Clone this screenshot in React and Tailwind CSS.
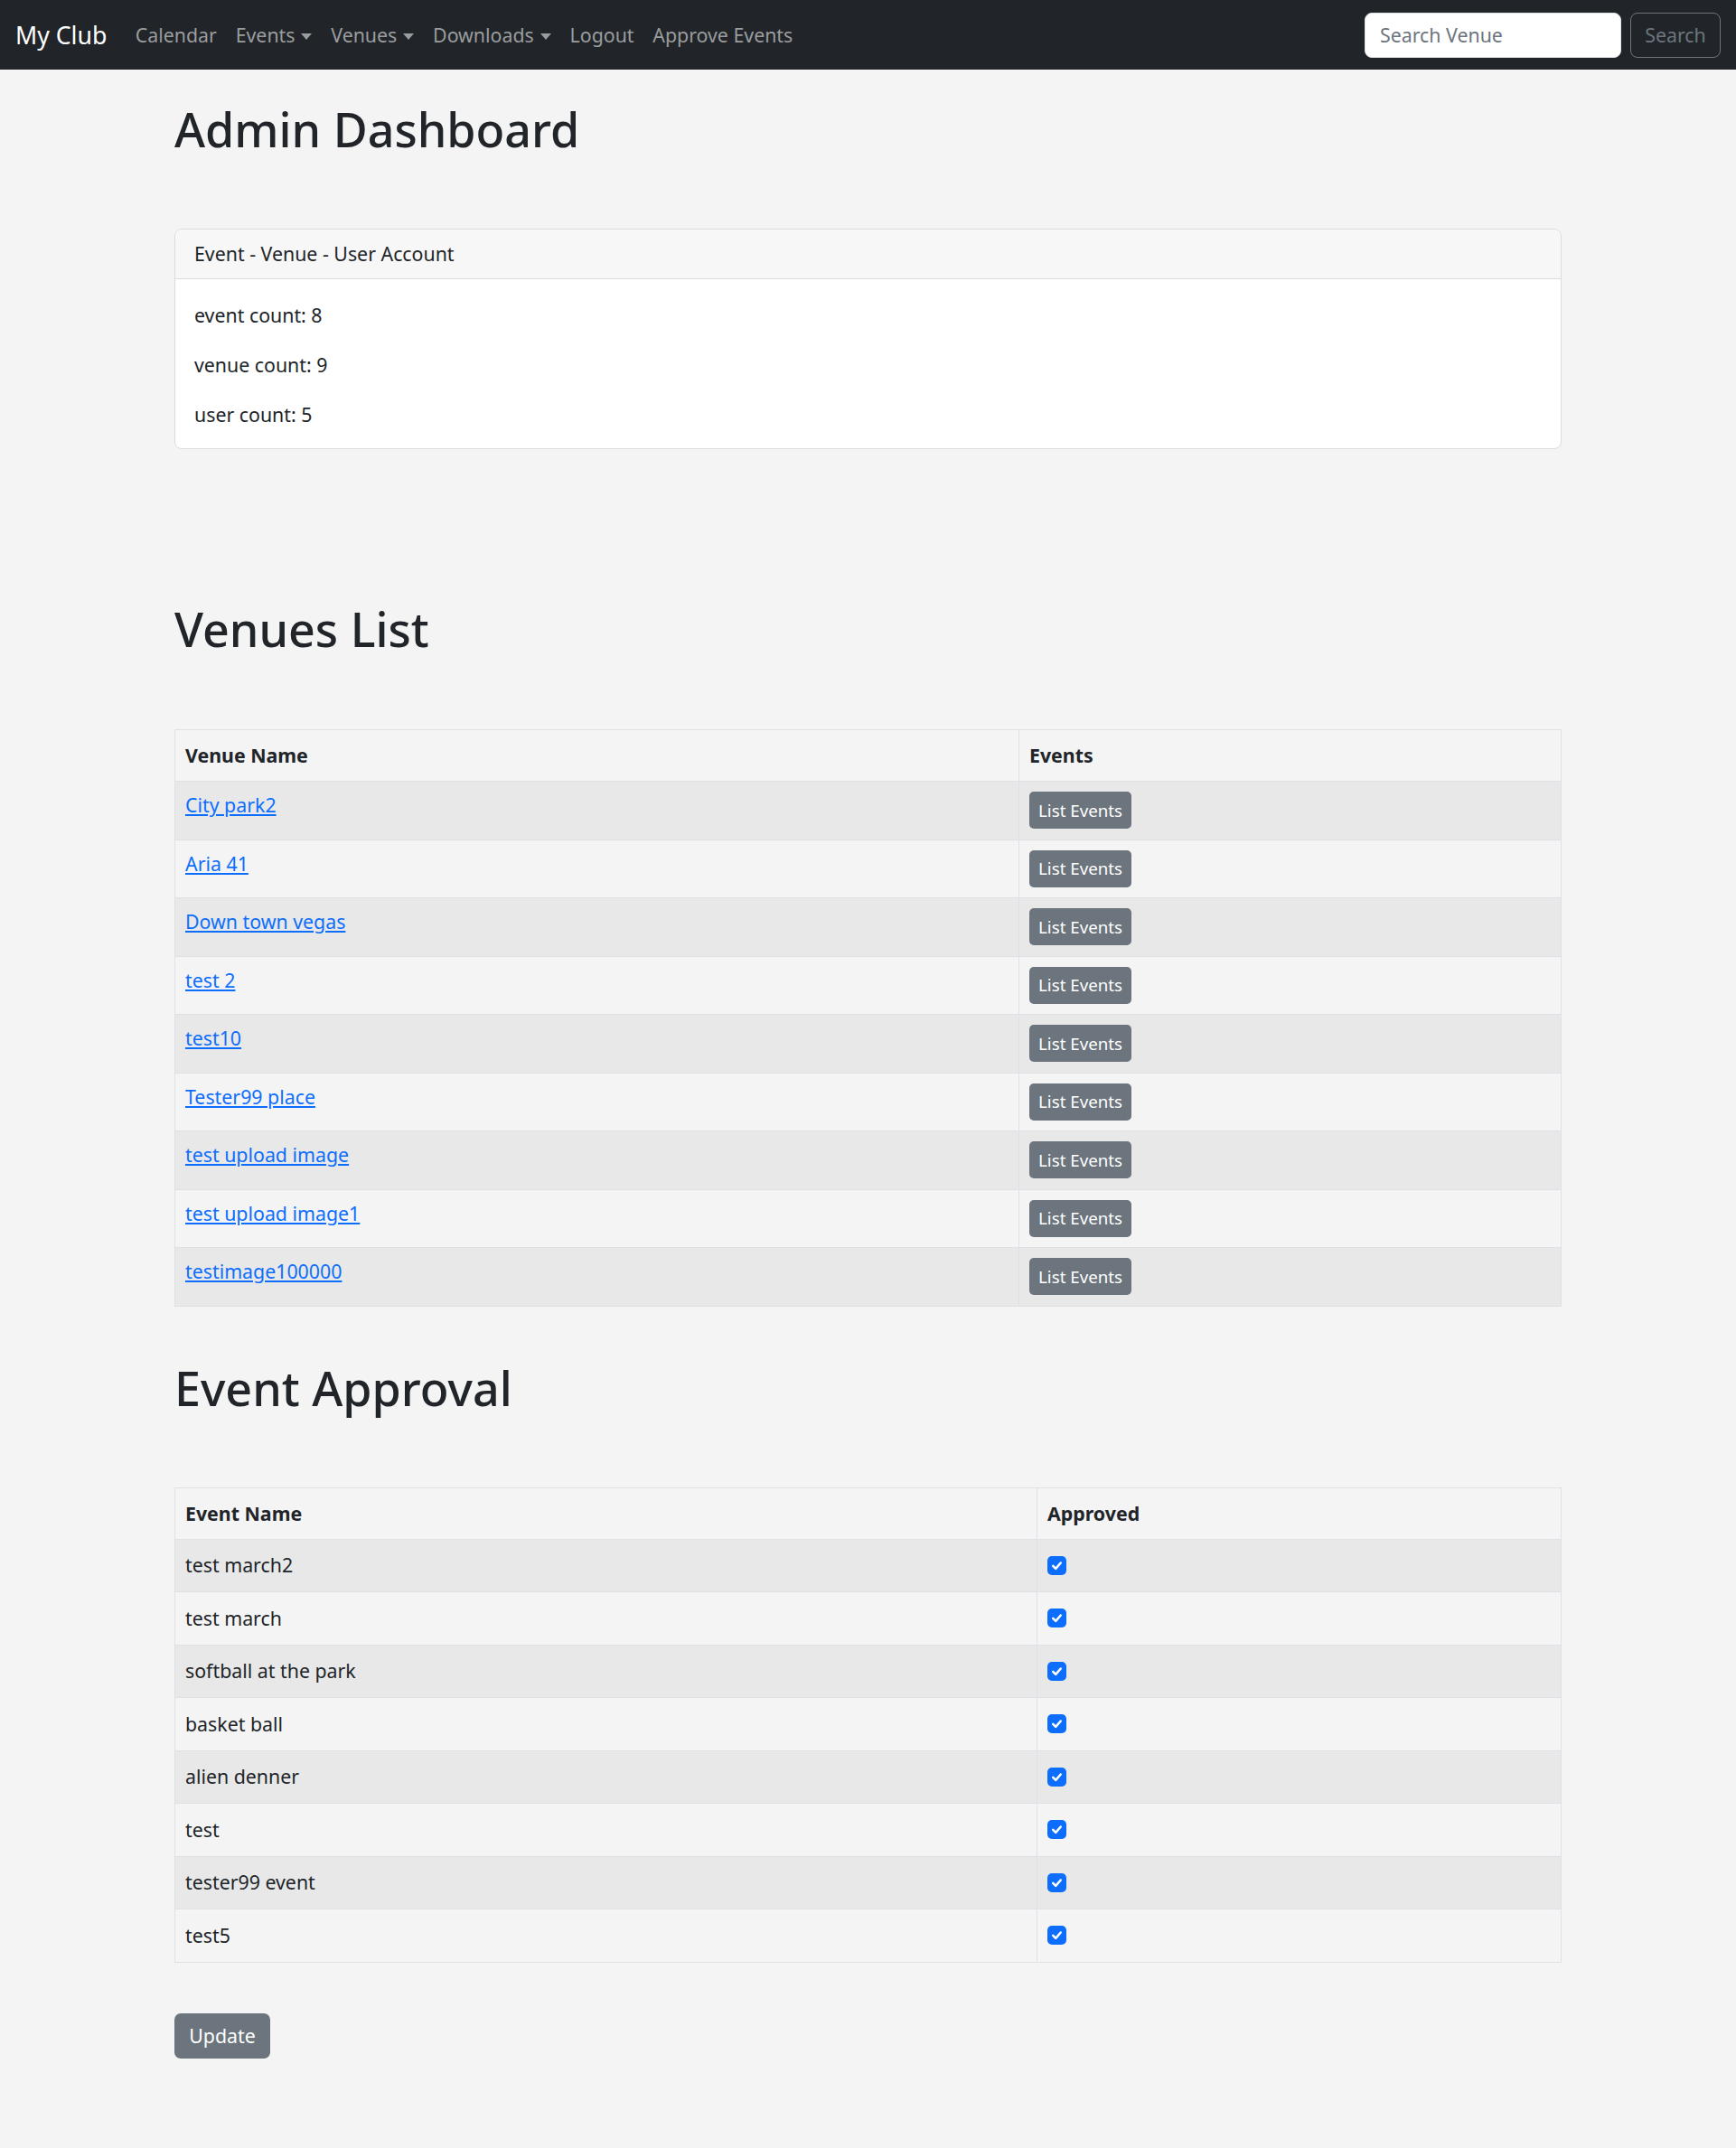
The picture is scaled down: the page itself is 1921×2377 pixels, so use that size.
const VENUES = [
  'City park2',
  'Aria 41',
  'Down town vegas',
  'test 2',
  'test10',
  'Tester99 place',
  'test upload image',
  'test upload image1',
  'testimage100000',
];

const EVENTS = [
  'test march2',
  'test march',
  'softball at the park',
  'basket ball',
  'alien denner',
  'test',
  'tester99 event',
  'test5',
];

const NAV = [
  { label: 'Calendar', caret: false },
  { label: 'Events', caret: true },
  { label: 'Venues', caret: true },
  { label: 'Downloads', caret: true },
  { label: 'Logout', caret: false },
  { label: 'Approve Events', caret: false },
];

function Caret() {
  return (
    <span className="ml-[7px] inline-block w-0 h-0 border-x-[6px] border-x-transparent border-t-[7px] border-t-[#9a9c9e] align-middle" />
  );
}

function Check() {
  return (
    <span className="w-[21px] h-[21px] rounded-[5px] bg-[#0d6efd] flex items-center justify-center">
      <svg width="17" height="17" viewBox="0 0 20 20" fill="none">
        <path d="M5 10.5l3.5 3.5L15 6.5" stroke="#fff" strokeWidth="3" strokeLinecap="round" strokeLinejoin="round" />
      </svg>
    </span>
  );
}

export default function App() {
  return (
    <div className="min-h-[2377px] bg-[#f4f4f4] text-[#212529] text-[21.33px] leading-[32px] font-['Noto_Sans','Open_Sans',sans-serif]">
      <nav className="h-[77px] bg-[#212529] flex items-center pl-[17px] pr-[17px]">
        <span className="text-white text-[26.7px] leading-[40px] mr-[21px]">My Club</span>
        <div className="flex items-center">
          {NAV.map(n => (
            <span key={n.label} className="px-[10.4px] text-[#9a9c9e] whitespace-nowrap">
              {n.label}
              {n.caret && <Caret />}
            </span>
          ))}
        </div>
        <div className="ml-auto flex items-center gap-[10px]">
          <div className="w-[284px] h-[50px] bg-white rounded-[8px] border border-[#dee2e6] flex items-center px-[16px] text-[#6c757d]">
            Search Venue
          </div>
          <div className="w-[100px] h-[50px] rounded-[8px] border border-[#6c757d] flex items-center justify-center text-[#6c757d]">
            Search
          </div>
        </div>
      </nav>

      <div className="w-[1535px] mx-auto pt-[34px] pb-[100px]">
        <h1 className="text-[52px] leading-[64px] font-medium">Admin Dashboard</h1>

        <div className="mt-[78px] rounded-[8px] border border-[#dcdcdc] bg-white overflow-hidden">
          <div className="h-[55px] bg-[#f7f7f7] border-b border-[#dcdcdc] px-[21px] flex items-center">
            Event - Venue - User Account
          </div>
          <div className="px-[21px] pt-[24px]">
            <p className="mb-[23px]">event count: 8</p>
            <p className="mb-[23px]">venue count: 9</p>
            <p className="mb-[21px]">user count: 5</p>
          </div>
        </div>

        <h1 className="mt-[167px] text-[52px] leading-[64px] font-medium">Venues List</h1>

        <div className="mt-[79px] border border-[#dee2e6]">
          <div className="grid grid-cols-[933px_1fr] h-[56px] font-bold">
            <div className="px-[11px] flex items-center">Venue Name</div>
            <div className="px-[11px] flex items-center border-l border-[#dee2e6]">Events</div>
          </div>
          {VENUES.map((v, i) => (
            <div
              key={v}
              className={`grid grid-cols-[933px_1fr] h-[64.5px] border-t border-[#dee2e6] ${i % 2 === 0 ? 'bg-[#e8e8e8]' : ''}`}
            >
              <div className="px-[11px] pt-[10px]">
                <a className="text-[#0d6efd] underline underline-offset-[2px]">{v}</a>
              </div>
              <div className="px-[11px] pt-[11px] border-l border-[#dee2e6]">
                <span className="inline-flex items-center justify-center w-[113px] h-[41px] rounded-[5px] bg-[#6c757d] text-white text-[18.7px]">
                  List Events
                </span>
              </div>
            </div>
          ))}
        </div>

        <h1 className="mt-[58px] text-[52px] leading-[64px] font-medium">Event Approval</h1>

        <div className="mt-[78px] border border-[#dee2e6]">
          <div className="grid grid-cols-[953px_1fr] h-[56px] font-bold">
            <div className="px-[11px] flex items-center">Event Name</div>
            <div className="px-[11px] flex items-center border-l border-[#dee2e6]">Approved</div>
          </div>
          {EVENTS.map((e, i) => (
            <div
              key={e}
              className={`grid grid-cols-[953px_1fr] h-[58.5px] border-t border-[#dee2e6] ${i % 2 === 0 ? 'bg-[#e8e8e8]' : ''}`}
            >
              <div className="px-[11px] flex items-center">{e}</div>
              <div className="px-[11px] flex items-center border-l border-[#dee2e6]">
                <Check />
              </div>
            </div>
          ))}
        </div>

        <button className="mt-[56px] w-[106px] h-[50px] rounded-[7px] bg-[#6c757d] text-white">Update</button>
      </div>
    </div>
  );
}
